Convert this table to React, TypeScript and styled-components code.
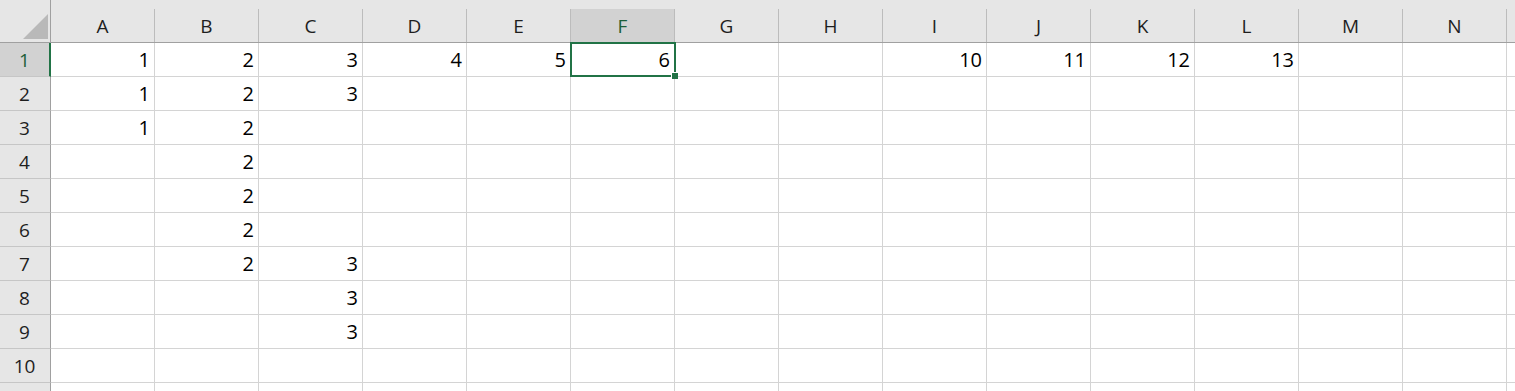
import { Fragment } from "react";
import styled, { createGlobalStyle } from "styled-components";

const GlobalStyle = createGlobalStyle`
  html, body {
    margin: 0;
    padding: 0;
    background: #ffffff;
    overflow: hidden;
  }
  body {
    font-family: "Open Sans", "Noto Sans", "Liberation Sans", sans-serif;
  }
`;

// A..N are labelled; the trailing column and row only peek in at the edge
const COLUMNS = ["A", "B", "C", "D", "E", "F", "G", "H", "I", "J", "K", "L", "M", "N", ""];
const LABELLED_ROWS = 10;
const ROW_COUNT = 11;
const SELECTED_COL = "F";
const SELECTED_ROW = 1;

// sparse sheet contents, keyed "A1"
const cells: Record<string, string> = {
  A1: "1", B1: "2", C1: "3", D1: "4", E1: "5", F1: "6",
  I1: "10", J1: "11", K1: "12", L1: "13",
  A2: "1", B2: "2", C2: "3",
  A3: "1", B3: "2",
  B4: "2", B5: "2", B6: "2",
  B7: "2", C7: "3",
  C8: "3", C9: "3",
};

const GREEN = "#217346";

const Sheet = styled.div`
  display: grid;
  grid-template-columns: 51px repeat(${COLUMNS.length}, 104px);
  grid-template-rows: 43px repeat(${ROW_COUNT}, 34px);
  width: 1515px;
  height: 391px;
  overflow: hidden;
  background: #ffffff;
`;

const Corner = styled.div`
  background: #e6e6e6;
  border-right: 1px solid #a0a0a0;
  border-bottom: 1px solid #a0a0a0;
  display: flex;
  align-items: flex-end;
  justify-content: flex-end;
  padding: 0 2px 3px 0;
  box-sizing: border-box;
`;

const Triangle = styled.div`
  width: 0;
  height: 0;
  border-style: solid;
  border-width: 0 0 25px 25px;
  border-color: transparent transparent #b9b9b9 transparent;
`;

const ColHeader = styled.div<{ $active?: boolean }>`
  box-sizing: border-box;
  border-bottom: 1px solid #a0a0a0;
  background:
    linear-gradient(#bcbcbc, #bcbcbc) right 9px / 1px calc(100% - 9px) no-repeat,
    ${(p) => (p.$active ? "linear-gradient(#d2d2d2, #d2d2d2) 0 9px / 100% 100% no-repeat," : "")}
    #e6e6e6;
  color: ${(p) => (p.$active ? "#1d5e38" : "#1e1e1e")};
  font-size: 19px;
  display: flex;
  align-items: center;
  justify-content: center;
  padding-top: 9px;
  padding-right: 1px;
`;

const RowHeader = styled.div<{ $active?: boolean }>`
  box-sizing: border-box;
  background: ${(p) => (p.$active ? "#d2d2d2" : "#e6e6e6")};
  border-bottom: 1px solid #c6c6c6;
  border-right: ${(p) => (p.$active ? `2px solid ${GREEN}` : "1px solid #a0a0a0")};
  color: ${(p) => (p.$active ? "#1d5e38" : "#1e1e1e")};
  font-size: 19px;
  display: flex;
  align-items: center;
  justify-content: center;
  padding-right: ${(p) => (p.$active ? "0" : "1px")};
`;

const Cell = styled.div`
  position: relative;
  box-sizing: border-box;
  border-right: 1px solid #d4d4d4;
  border-bottom: 1px solid #d4d4d4;
  color: #000000;
  font-size: 20px;
  display: flex;
  align-items: center;
  justify-content: flex-end;
  padding-right: 4px;
  white-space: nowrap;
`;

const Selection = styled.div`
  position: absolute;
  left: -1px;
  top: -1px;
  right: -2px;
  bottom: -1px;
  border: 2px solid ${GREEN};
  pointer-events: none;
  z-index: 2;
`;

const FillHandle = styled.div`
  position: absolute;
  right: -4px;
  bottom: -4px;
  width: 6px;
  height: 6px;
  background: ${GREEN};
  border: 1px solid #ffffff;
  border-width: 1px 0 0 1px;
`;

const CellValue = styled.span`
  position: relative;
  z-index: 3;
`;

export default function App() {
  const rows = Array.from({ length: ROW_COUNT }, (_, i) => i + 1);

  return (
    <>
      <GlobalStyle />
      <Sheet>
        <Corner>
          <Triangle />
        </Corner>
        {COLUMNS.map((col, i) => (
          <ColHeader key={`c${i}`} $active={col === SELECTED_COL}>
            {col}
          </ColHeader>
        ))}
        {rows.map((row) => (
          <Fragment key={row}>
            <RowHeader $active={row === SELECTED_ROW}>
              {row <= LABELLED_ROWS ? row : ""}
            </RowHeader>
            {COLUMNS.map((col, i) => {
              const id = `${col}${row}`;
              const selected = col === SELECTED_COL && row === SELECTED_ROW;
              return (
                <Cell key={`${i}-${row}`}>
                  {col && cells[id] && <CellValue>{cells[id]}</CellValue>}
                  {selected && (
                    <Selection>
                      <FillHandle />
                    </Selection>
                  )}
                </Cell>
              );
            })}
          </Fragment>
        ))}
      </Sheet>
    </>
  );
}
